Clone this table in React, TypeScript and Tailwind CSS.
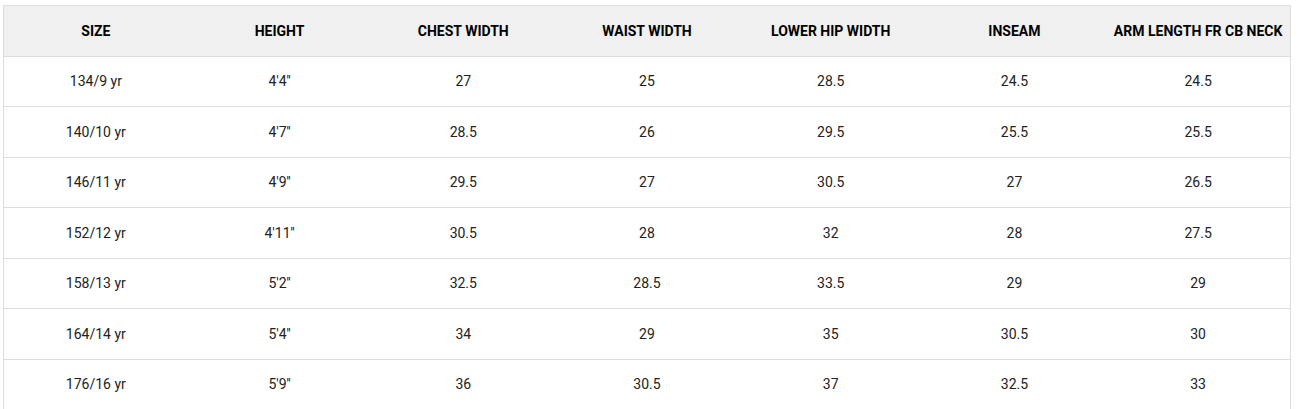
import React from 'react';

const headers = ['SIZE', 'HEIGHT', 'CHEST WIDTH', 'WAIST WIDTH', 'LOWER HIP WIDTH', 'INSEAM', 'ARM LENGTH FR CB NECK'];

const rows = [
  ['134/9 yr', '4\'4\'\'', '27', '25', '28.5', '24.5', '24.5'],
  ['140/10 yr', '4\'7\'\'', '28.5', '26', '29.5', '25.5', '25.5'],
  ['146/11 yr', '4\'9\'\'', '29.5', '27', '30.5', '27', '26.5'],
  ['152/12 yr', '4\'11\'\'', '30.5', '28', '32', '28', '27.5'],
  ['158/13 yr', '5\'2\'\'', '32.5', '28.5', '33.5', '29', '29'],
  ['164/14 yr', '5\'4\'\'', '34', '29', '35', '30.5', '30'],
  ['176/16 yr', '5\'9\'\'', '36', '30.5', '37', '32.5', '33'],
];

const App: React.FC = () => {
  return (
    <div className="w-[1298px] h-[409px] overflow-hidden bg-white pt-[5px] pl-[3px] font-['Roboto',sans-serif]">
      <div className="w-[1288px] border-x border-t border-[#dddddd]">
        <div className="grid grid-cols-7 items-center h-[51px] border-b border-[#dddddd] bg-[#f0f0f0]">
          {headers.map((h) => (
            <div key={h} className="text-center text-[14px] font-bold text-black">
              {h}
            </div>
          ))}
        </div>
        {rows.map((r, i) => (
          <div
            key={i}
            className={`grid grid-cols-7 items-center border-b border-[#dddddd] text-[14px] text-[#222] ${
              i % 2 === 0 ? 'h-[50px]' : 'h-[51px]'
            }`}
          >
            {r.map((c, j) => (
              <div key={j} className="text-center">
                {c}
              </div>
            ))}
          </div>
        ))}
      </div>
    </div>
  );
};

export default App;
